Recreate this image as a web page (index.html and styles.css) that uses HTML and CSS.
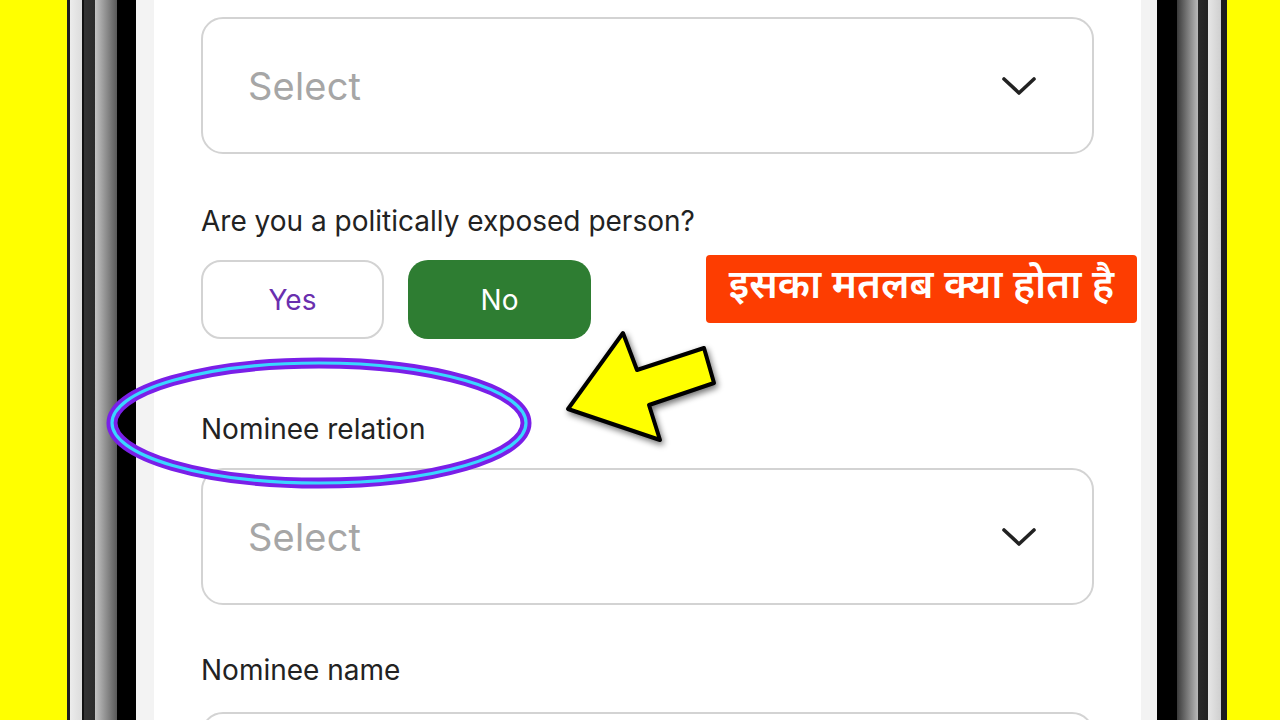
FILE: index.html
```html
<!DOCTYPE html>
<html lang="en">
<head>
<meta charset="utf-8">
<title>Nominee form</title>
<link rel="stylesheet" href="styles.css">
</head>
<body>
<div class="stage">
  <div class="bg-side"></div>
  <div class="bezel bezel-left"></div>
  <main class="screen">
    <div class="form">
      <div class="select">
        <span class="placeholder">Select</span>
        <svg class="chev" viewBox="0 0 36 20" width="36" height="20"><path d="M3 3 L18 17 L33 3" fill="none" stroke="#222" stroke-width="3.6" stroke-linecap="round" stroke-linejoin="round"/></svg>
      </div>
      <div class="label label-pep">Are you a politically exposed person?</div>
      <div class="choices">
        <button class="choice choice-yes">Yes</button>
        <button class="choice choice-no">No</button>
      </div>
      <div class="label label-rel">Nominee relation</div>
      <div class="select">
        <span class="placeholder">Select</span>
        <svg class="chev" viewBox="0 0 36 20" width="36" height="20"><path d="M3 3 L18 17 L33 3" fill="none" stroke="#222" stroke-width="3.6" stroke-linecap="round" stroke-linejoin="round"/></svg>
      </div>
      <div class="label label-name">Nominee name</div>
      <div class="input"></div>
    </div>
  </main>
  <div class="bezel bezel-right"></div>
  <div class="bg-side"></div>

  <div class="badge">इसका मतलब क्या होता है</div>

  <svg class="ring" viewBox="0 0 440 140" width="440" height="140">
    <ellipse cx="220" cy="70" rx="207" ry="60" fill="none" stroke="#7a1fe8" stroke-width="11"/>
    <ellipse cx="220" cy="70" rx="207" ry="60" fill="none" stroke="#3ad6ff" stroke-width="3.2"/>
  </svg>

  <svg class="arrow" viewBox="0 0 170 130" width="170" height="130">
    <defs>
      <filter id="sh" x="-20%" y="-20%" width="140%" height="140%">
        <feGaussianBlur in="SourceAlpha" stdDeviation="3"/>
        <feOffset dx="2" dy="3" result="b"/>
        <feComponentTransfer><feFuncA type="linear" slope="0.55"/></feComponentTransfer>
        <feMerge><feMergeNode/><feMergeNode in="SourceGraphic"/></feMerge>
      </filter>
    </defs>
    <polygon filter="url(#sh)" points="8,99 63,23 77,60 144,38 154,73 89,95 100,130" transform="translate(0,-10)" fill="#ffff00" stroke="#000" stroke-width="4" stroke-linejoin="round"/>
  </svg>
</div>
</body>
</html>
```

FILE: styles.css
```css
* { box-sizing: border-box; }
html, body { margin: 0; padding: 0; }
body {
  width: 1280px;
  height: 720px;
  overflow: hidden;
  background: #ffff00;
  font-family: Inter, "Noto Sans", "Liberation Sans", sans-serif;
}
.stage {
  position: relative;
  display: flex;
  width: 1280px;
  height: 720px;
}
.bg-side {
  flex: 1;
  background: #ffff00;
}
.bezel {
  flex: none;
  height: 100%;
}
.bezel-left {
  width: 87px;
  background: linear-gradient(90deg,
    #1e1e1e 0, #1e1e1e 3px,
    #ececec 3px, #dcdcdc 15px,
    #111 15px, #111 17px,
    #333 17px, #2c2c2c 28px,
    #c4c4c4 28px, #5a5a5a 50px,
    #000 50px, #000 69px,
    #f3f3f3 69px, #f3f3f3 87px);
}
.bezel-right {
  width: 86px;
  background: linear-gradient(90deg,
    #f3f3f3 0, #f3f3f3 16px,
    #000 16px, #000 36px,
    #3a3a3a 36px, #b9b9b9 57px,
    #2a2a2a 57px, #222 67px,
    #e6e6e6 67px, #cfcfcf 80px,
    #1e1e1e 80px, #1e1e1e 86px);
}
.bg-side:first-child { flex: none; width: 67px; }
.bg-side:last-child { flex: none; width: 53px; }
.screen {
  flex: none;
  width: 987px;
  height: 100%;
  background: #fff;
  overflow: hidden;
}
.form {
  display: flex;
  flex-direction: column;
  padding: 17px 47px 0 47px;
}
.select, .input {
  display: flex;
  align-items: center;
  justify-content: space-between;
  height: 137px;
  border: 2px solid #d3d3d3;
  border-radius: 22px;
  padding: 0 55px 0 45px;
  flex: none;
}
.placeholder {
  font-size: 38px;
  color: #a6a6a6;
  letter-spacing: 0.2px;
}
.chev { display: block; }
.label {
  font-size: 28px;
  line-height: 34px;
  color: #222;
}
.label-pep { margin-top: 50px; }
.choices {
  display: flex;
  gap: 24px;
  margin-top: 22px;
}
.choice {
  width: 183px;
  height: 79px;
  border-radius: 20px;
  font-family: inherit;
  font-size: 28px;
  padding: 0;
}
.choice-yes {
  background: #fff;
  border: 2px solid #d3d3d3;
  color: #6a2fae;
}
.choice-no {
  background: #2e7d32;
  border: none;
  color: #fff;
}
.label-rel { margin-top: 73px; }
.label-rel + .select { margin-top: 22px; }
.label-name { margin-top: 48px; }
.input { margin-top: 25px; }

.badge {
  position: absolute;
  left: 706px;
  top: 255px;
  width: 431px;
  height: 68px;
  background: #fd3d01;
  border-radius: 4px;
  color: #fff;
  font-family: "Noto Sans Devanagari", "Lohit Devanagari", "Noto Sans", sans-serif;
  font-weight: 600;
  font-size: 40px;
  line-height: 66px;
  text-align: center;
  white-space: nowrap;
}
.ring {
  position: absolute;
  left: 99px;
  top: 353px;
}
.arrow {
  position: absolute;
  left: 560px;
  top: 320px;
  overflow: visible;
}
```
